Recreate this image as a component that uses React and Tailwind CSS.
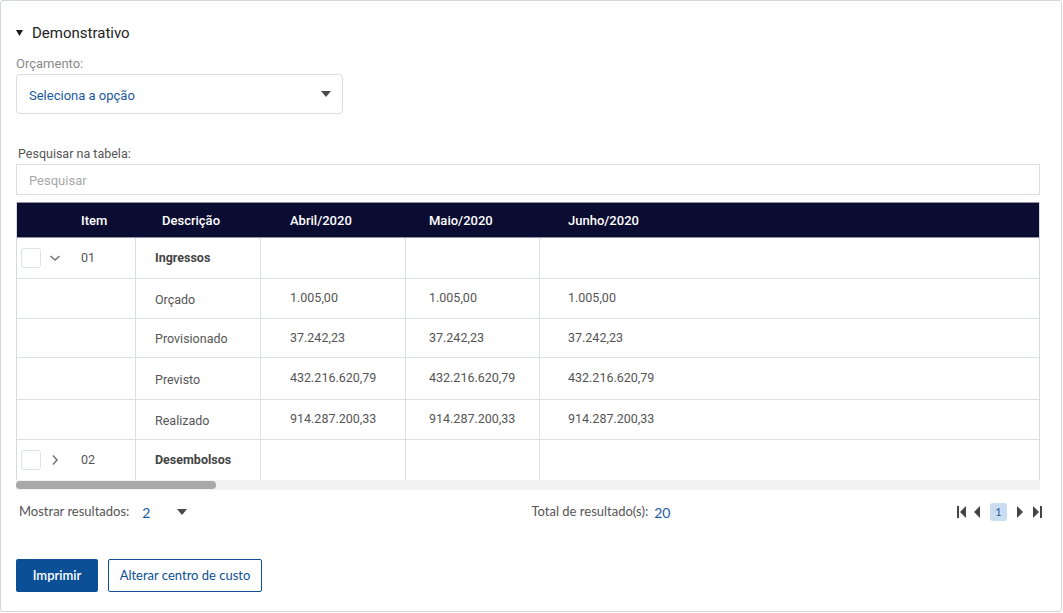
import React from "react";

const rows = [
  { type: "group", open: true, item: "01", desc: "Ingressos" },
  { type: "data", desc: "Orçado", v: ["1.005,00", "1.005,00", "1.005,00"] },
  { type: "data", desc: "Provisionado", v: ["37.242,23", "37.242,23", "37.242,23"] },
  { type: "data", desc: "Previsto", v: ["432.216.620,79", "432.216.620,79", "432.216.620,79"] },
  { type: "data", desc: "Realizado", v: ["914.287.200,33", "914.287.200,33", "914.287.200,33"] },
  { type: "group", open: false, item: "02", desc: "Desembolsos" },
];

const heights = ["h-[41px]", "h-[40px]", "h-[39px]", "h-[42px]", "h-[40px]", "h-[40px]"];

function Caret({ className = "" }) {
  return (
    <svg width="10" height="6" viewBox="0 0 10 6" className={className}>
      <path d="M0 0 L10 0 L5 6 Z" fill="#4a4a4a" />
    </svg>
  );
}

function Chevron({ open }) {
  return open ? (
    <svg width="12" height="8" viewBox="0 0 12 8">
      <path d="M1.5 2 L6 6 L10.5 2" fill="none" stroke="#777" strokeWidth="1.6" />
    </svg>
  ) : (
    <svg width="8" height="12" viewBox="0 0 8 12">
      <path d="M2 1.5 L6 6 L2 10.5" fill="none" stroke="#777" strokeWidth="1.6" />
    </svg>
  );
}

export default function App() {
  return (
    <div className="w-[1063px] h-[613px] bg-white" style={{ fontFamily: "Roboto, sans-serif" }}>
      <div className="w-[1062px] h-[612px] border border-[#d3d6db] rounded-[3px] pl-[15px] pr-[21px] pt-[22px]">
        <div className="flex items-center h-5 gap-[9px]">
          <svg width="7" height="6" viewBox="0 0 7 6" className="ml-[0px]">
            <path d="M0 0 L7 0 L3.5 6 Z" fill="#1a1a1a" />
          </svg>
          <span className="text-[15px] text-[#222]">Demonstrativo</span>
        </div>
        <div className="mt-[13px] text-[13px] leading-[15px] text-[#8a8a8a]">Orçamento:</div>
        <div className="mt-[3px] w-[327px] h-[40px] border border-[#d9dce1] rounded-[4px] flex items-center justify-between pl-3 pr-[11px]">
          <span className="text-[13px] text-[#1b5aa0] pt-[3px]">Seleciona a opção</span>
          <Caret />
        </div>
        <div className="mt-[32px] ml-[2px] text-[12.5px] leading-[15px] text-[#555]">Pesquisar na tabela:</div>
        <div className="mt-[3px] h-[31px] border border-[#dcdfe3] flex items-center pl-3 pt-[3px] text-[13px] text-[#a8a8a8]">
          Pesquisar
        </div>
        <div className="mt-[7px] border-x border-[#d6d9de]">
          <div className="grid grid-cols-[119px_125px_145px_134px_1fr] h-[36px] bg-[#0b0c32] border-y border-[#8e91a8] text-white text-[13px] font-medium items-center pt-[2px]">
            <div className="pl-[64px]">Item</div>
            <div className="pl-[26px]">Descrição</div>
            <div className="pl-[29px]">Abril/2020</div>
            <div className="pl-[23px]">Maio/2020</div>
            <div className="pl-[28px]">Junho/2020</div>
          </div>
          {rows.map((r, i) => (
            <div
              key={i}
              className={`grid grid-cols-[119px_125px_145px_134px_1fr] ${heights[i]} ${i < rows.length - 1 ? "border-b border-[#dcdfe4]" : ""} text-[12.5px] text-[#555]`}
            >
              <div className="flex items-center border-r border-[#dcdfe4]">
                {r.type === "group" && (
                  <>
                    <div className="ml-[4px] w-[20px] h-[20px] border border-[#dfe2e6] rounded-[3px]" />
                    <div className="w-[28px] flex justify-center">
                      <Chevron open={r.open} />
                    </div>
                    <span className="ml-[12px]">{r.item}</span>
                  </>
                )}
              </div>
              <div className="flex items-center pl-[19px] border-r border-[#dcdfe4]">
                <span className={r.type === "group" ? "font-bold text-[#444]" : "pt-[3px]"}>{r.desc}</span>
              </div>
              <div className="flex items-center pl-[29px] border-r border-[#dcdfe4]">
                {r.v && <span>{r.v[0]}</span>}
              </div>
              <div className="flex items-center pl-[23px] border-r border-[#dcdfe4]">
                {r.v && <span>{r.v[1]}</span>}
              </div>
              <div className="flex items-center pl-[28px]">{r.v && <span>{r.v[2]}</span>}</div>
            </div>
          ))}
        </div>
        <div className="h-[10px] bg-[#f1f1f1] flex items-center">
          <div className="w-[200px] h-[8px] rounded-full bg-[#a9a9a9]" />
        </div>
        <div className="mt-[12px] h-[20px] flex items-center text-[13px] text-[#555]" style={{ fontFamily: "Lato, sans-serif" }}>
          <span className="ml-[3px]">Mostrar resultados:</span>
          <span className="ml-[13px] text-[#1b5aa0] text-[14px]">2</span>
          <Caret className="ml-[27px]" />
          <span className="ml-[344px]">Total de resultado(s):</span>
          <span className="ml-[6px] text-[#1b5aa0] text-[14px]">20</span>
          <div className="ml-auto mr-[-2px] flex items-center">
            <svg width="9" height="12" viewBox="0 0 9 12">
              <rect x="0" y="0" width="2" height="12" fill="#444" />
              <path d="M9 0 L3 6 L9 12 Z" fill="#444" />
            </svg>
            <svg width="7" height="12" viewBox="0 0 7 12" className="ml-[7px]">
              <path d="M7 0 L1 6 L7 12 Z" fill="#444" />
            </svg>
            <div className="ml-[10px] w-[17px] h-[18px] rounded-[3px] bg-[#cadcf0] flex items-center justify-center text-[11px] text-[#1b5aa0]">
              1
            </div>
            <svg width="7" height="12" viewBox="0 0 7 12" className="ml-[10px]">
              <path d="M0 0 L6 6 L0 12 Z" fill="#444" />
            </svg>
            <svg width="9" height="12" viewBox="0 0 9 12" className="ml-[9px]">
              <path d="M0 0 L6 6 L0 12 Z" fill="#444" />
              <rect x="7" y="0" width="2" height="12" fill="#444" />
            </svg>
          </div>
        </div>
        <div className="mt-[37px] flex gap-[10px]" style={{ fontFamily: "Lato, sans-serif" }}>
          <button className="w-[82px] h-[33px] bg-[#0b4f96] text-white text-[13px] font-semibold rounded-[2px]">
            Imprimir
          </button>
          <button className="w-[154px] h-[33px] border border-[#0b4f96] text-[#0b4f96] text-[13px] rounded-[2px]">
            Alterar centro de custo
          </button>
        </div>
      </div>
    </div>
  );
}
